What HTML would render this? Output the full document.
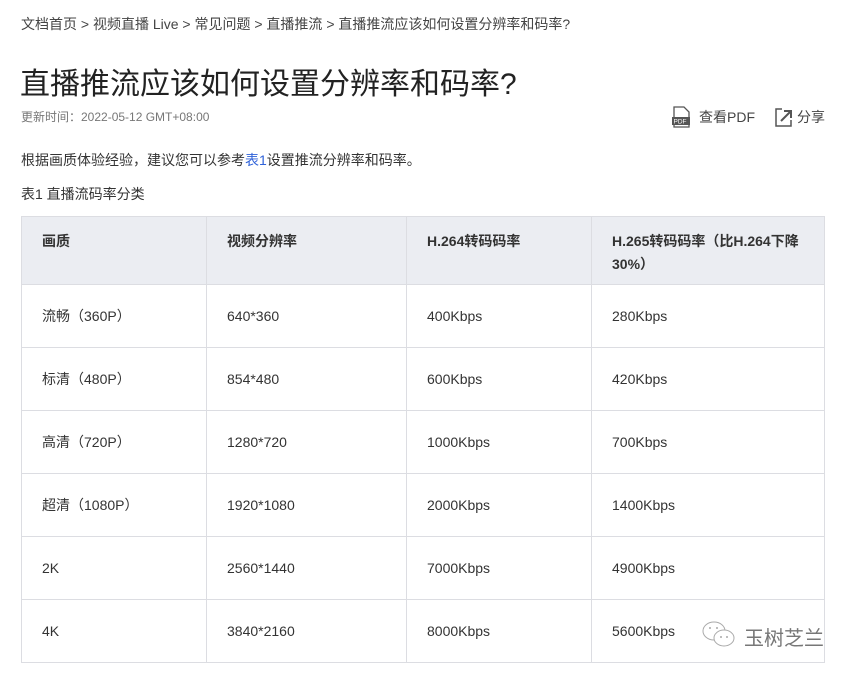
<!DOCTYPE html>
<html><head><meta charset="utf-8"><style>
body{margin:0;background:#fff;font-family:"Liberation Sans","Noto Sans CJK SC",sans-serif;color:#333;width:854px;height:674px;overflow:hidden;position:relative}
.a{position:absolute;white-space:nowrap}
table{position:absolute;left:21px;top:216px;border-collapse:collapse;width:803px;table-layout:fixed;font-size:14px;color:#333}
td,th{border:1px solid #dcdde2;padding:0 20px 0 20px;text-align:left;vertical-align:middle;height:62px}
th{background:#ebedf2;font-weight:bold;height:68px;vertical-align:top;padding-top:13px;line-height:23px;box-sizing:border-box}
</style></head><body>
<div class="a" style="left:21px;top:14px;font-size:14px;color:#444">文档首页 &gt; 视频直播 Live &gt; 常见问题 &gt; 直播推流 &gt; 直播推流应该如何设置分辨率和码率?</div>
<div class="a" style="left:20px;top:59px;font-size:30px;color:#222">直播推流应该如何设置分辨率和码率?</div>
<div class="a" style="left:21px;top:108px;font-size:12px;color:#777">更新时间：2022-05-12 GMT+08:00</div>
<svg class="a" style="left:671px;top:106px" width="22" height="22" viewBox="0 0 22 22"><path d="M3 1h10l5 5v15H3z" fill="none" stroke="#555" stroke-width="1.3"/><rect x="1" y="11" width="18" height="8" fill="#555"/><text x="2.5" y="17.5" font-size="6.5" fill="#fff" font-family="Liberation Sans">PDF</text></svg>
<div class="a" style="left:699px;top:107px;font-size:14px;color:#444">查看PDF</div>
<svg class="a" style="left:774px;top:106px" width="22" height="22" viewBox="0 0 22 22"><path d="M8 3H2v17h15v-6" fill="none" stroke="#555" stroke-width="1.5"/><path d="M7 15l9-9M10 5h7v7" fill="none" stroke="#555" stroke-width="2"/></svg>
<div class="a" style="left:797px;top:107px;font-size:14px;color:#444">分享</div>
<div class="a" style="left:21px;top:150px;font-size:14px;color:#333">根据画质体验经验，建议您可以参考<span style="color:#2f62d9">表1</span>设置推流分辨率和码率。</div>
<div class="a" style="left:21px;top:184px;font-size:14px;color:#333">表1 直播流码率分类</div>
<table>
<colgroup><col style="width:185px"><col style="width:200px"><col style="width:185px"><col style="width:233px"></colgroup>
<tr><th>画质</th><th>视频分辨率</th><th>H.264转码码率</th><th>H.265转码码率（比H.264下降30%）</th></tr>
<tr><td>流畅（360P）</td><td>640*360</td><td>400Kbps</td><td>280Kbps</td></tr>
<tr><td>标清（480P）</td><td>854*480</td><td>600Kbps</td><td>420Kbps</td></tr>
<tr><td>高清（720P）</td><td>1280*720</td><td>1000Kbps</td><td>700Kbps</td></tr>
<tr><td>超清（1080P）</td><td>1920*1080</td><td>2000Kbps</td><td>1400Kbps</td></tr>
<tr><td>2K</td><td>2560*1440</td><td>7000Kbps</td><td>4900Kbps</td></tr>
<tr><td>4K</td><td>3840*2160</td><td>8000Kbps</td><td>5600Kbps</td></tr>
</table>
<svg class="a" style="left:701px;top:620px" width="36" height="30" viewBox="0 0 36 30"><ellipse cx="13" cy="11" rx="11" ry="9" fill="#fff" stroke="#aaa"/><ellipse cx="23" cy="18" rx="10" ry="8" fill="#fff" stroke="#aaa"/><circle cx="9" cy="8" r="1" fill="#aaa"/><circle cx="16" cy="8" r="1" fill="#aaa"/><circle cx="20" cy="17" r="1" fill="#aaa"/><circle cx="26" cy="17" r="1" fill="#aaa"/></svg>
<div class="a" style="left:744px;top:622px;font-size:20px;color:#777">玉树芝兰</div>
</body></html>
